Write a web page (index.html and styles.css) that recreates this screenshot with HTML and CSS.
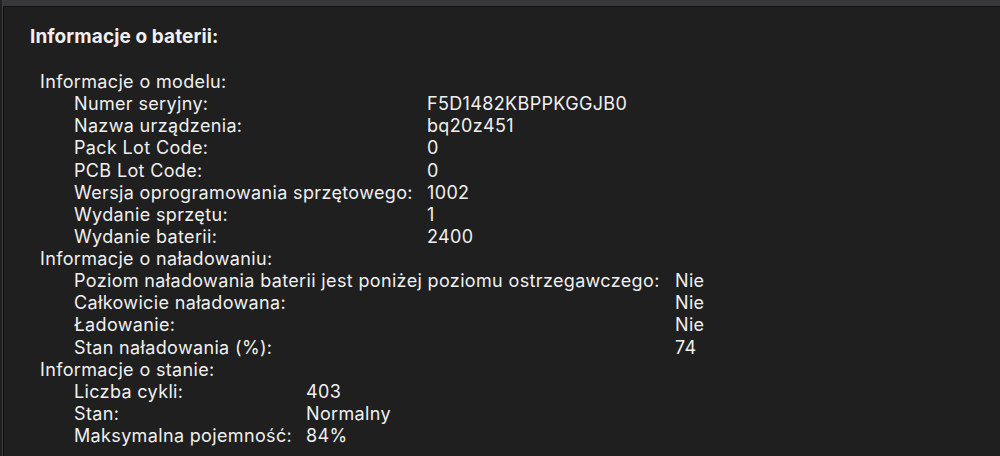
FILE: index.html
```html
<!DOCTYPE html>
<html lang="pl">
<head>
    <meta charset="UTF-8">
    <meta name="viewport" content="width=device-width, initial-scale=1.0">
    <title>Informacje o baterii</title>
    <link rel="stylesheet" href="styles.css">
</head>
<body>
    <div class="window">
        <div class="toolbar-edge"></div>

        <main class="report">
            <h1 class="report-title">Informacje o baterii:</h1>

            <section class="group">
                <div class="group-title">Informacje o modelu:</div>
                <dl class="props props-model">
                    <dt>Numer seryjny:</dt><dd>F5D1482KBPPKGGJB0</dd>
                    <dt>Nazwa urządzenia:</dt><dd>bq20z451</dd>
                    <dt>Pack Lot Code:</dt><dd>0</dd>
                    <dt>PCB Lot Code:</dt><dd>0</dd>
                    <dt>Wersja oprogramowania sprzętowego:</dt><dd>1002</dd>
                    <dt>Wydanie sprzętu:</dt><dd>1</dd>
                    <dt>Wydanie baterii:</dt><dd>2400</dd>
                </dl>
            </section>

            <section class="group">
                <div class="group-title">Informacje o naładowaniu:</div>
                <dl class="props props-charge">
                    <dt>Poziom naładowania baterii jest poniżej poziomu ostrzegawczego:</dt><dd>Nie</dd>
                    <dt>Całkowicie naładowana:</dt><dd>Nie</dd>
                    <dt>Ładowanie:</dt><dd>Nie</dd>
                    <dt>Stan naładowania (%):</dt><dd>74</dd>
                </dl>
            </section>

            <section class="group">
                <div class="group-title">Informacje o stanie:</div>
                <dl class="props props-health">
                    <dt>Liczba cykli:</dt><dd>403</dd>
                    <dt>Stan:</dt><dd>Normalny</dd>
                    <dt>Maksymalna pojemność:</dt><dd>84%</dd>
                </dl>
            </section>
        </main>
    </div>
</body>
</html>
```

FILE: styles.css
```css
body {
    margin: 0;
    background-color: #1f1f1f;
    color: #f0f0f0;
    font-family: Inter, 'Noto Sans', sans-serif;
    height: 100vh;
    overflow: hidden;
}

.window {
    height: 100vh;
    border-left: 1px solid #3f3f42;
    margin-left: 2px;
    box-shadow: inset 1px 0 0 #111;
}

.toolbar-edge {
    height: 6px;
    background-color: #38383c;
    border-bottom: 1px solid #121212;
}

.report {
    padding: 0 0 0 27px;
}

.report-title {
    margin: 0;
    padding-top: 19px;
    font-size: 19px;
    line-height: 22px;
    font-weight: 700;
    letter-spacing: 0.1px;
}

.group {
    padding-left: 10px;
    font-size: 18px;
    line-height: 22.125px;
    letter-spacing: 0.35px;
}

.group:first-of-type {
    margin-top: 23px;
}

.props {
    display: grid;
    margin: 0;
    padding-left: 34px;
}

.props dt,
.props dd {
    margin: 0;
    white-space: nowrap;
}

.props-model {
    grid-template-columns: 353px auto;
}

.props-charge {
    grid-template-columns: 601px auto;
}

.props-health {
    grid-template-columns: 232px auto;
}
```
